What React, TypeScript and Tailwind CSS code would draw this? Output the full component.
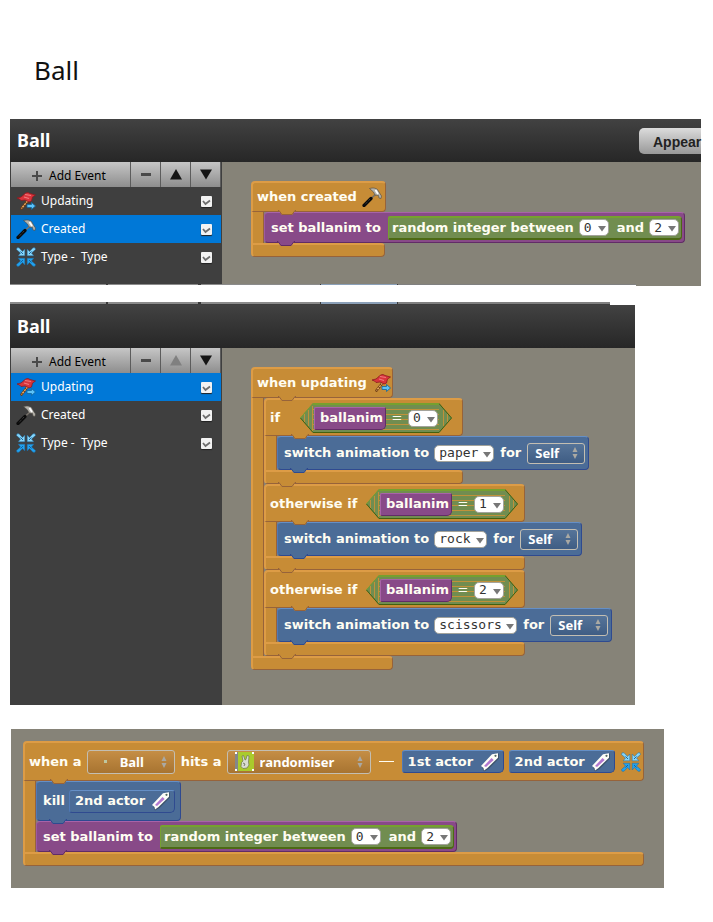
import type { ReactNode } from "react";

const BLOCK_TEXT = "font-['DejaVu_Sans',sans-serif] text-[13px] leading-4 font-bold text-[#fffdf2] whitespace-nowrap";

type Tone = "orange" | "blue" | "purple";

const tones: Record<Tone, { box: string; fill: string; dark: string }> = {
  orange: {
    box: "bg-[#c78c36] border-t-[#dd9c46] border-l-[#dd9c46] border-r-[#97633a] border-b-[#97633a]",
    fill: "#c78c36",
    dark: "#97633a",
  },
  blue: {
    box: "bg-[#4b6c97] border-t-[#658fc6] border-l-[#5079b6] border-r-[#2f4a90] border-b-[#2f4a90]",
    fill: "#4b6c97",
    dark: "#2f4a90",
  },
  purple: {
    box: "bg-[#884a88] border-t-[#a863a8] border-l-[#9d5a9f] border-r-[#612c66] border-b-[#612c66]",
    fill: "#884a88",
    dark: "#612c66",
  },
};

/* ---------- icons ---------- */

function FlagIcon() {
  return (
    <svg viewBox="0 0 20 20" className="size-5 shrink-0" aria-hidden="true">
      <path d="M11.500 10 5.500 17.500" stroke="#6b3a12" strokeWidth="2.600" strokeLinecap="round" />
      <path d="M11.500 10 5.500 17.500" stroke="#efb269" strokeWidth="1.400" strokeDasharray="2 1" />
      <path d="M1 7 5 6 8 3.500 9.500 2 12 1.500 14 2.500 19.500 4 16.500 6 15.500 10 13 11 9 9 5 9.500 3.500 8Z" fill="#d9343c" stroke="#8c1a20" strokeWidth="0.800" />
      <path d="M9 3.500 15 4.500M8 6l5 1.500" stroke="#f27a7c" strokeWidth="1.200" />
      <path d="M11 13.500h4.500v-2l4 3.500-4 3.500v-2H11z" fill="#5cc2f7" stroke="#12649c" strokeWidth="0.800" />
    </svg>
  );
}

function HammerIcon() {
  return (
    <svg viewBox="0 0 20 20" className="size-5 shrink-0" aria-hidden="true">
      <path d="M14 7 9 11.500" stroke="#77716a" strokeWidth="1.600" />
      <path d="M9 11.500 2 18.500" stroke="#0b0b0b" strokeWidth="3.200" strokeLinecap="round" />
      <path d="M8 12 3 17.500" stroke="#5b5b5b" strokeWidth="0.800" strokeDasharray="1 1" />
      <path d="M7.500 1.500C11 .5 13.500 1 15.500 2.500L17.500 6l2 3-.5 2.500-2-.5-.5-2.500-3.500-.5-1.500-3Z" fill="#b5b3ac" stroke="#4a4740" strokeWidth="0.600" />
      <path d="M13.500 3 16 7" stroke="#fff" strokeWidth="1.800" />
    </svg>
  );
}

function CollideIcon() {
  return (
    <svg viewBox="0 0 20 20" className="size-5 shrink-0" aria-hidden="true">
      <g stroke="#1b6aa5" strokeWidth="0.500">
        <path d="M.5 2.500 1 .8 3 .8 6.500 4.500 8.800 2V8.800H2.200L4.500 6z" fill="#86d6fa" />
        <path d="M19.500 2.500 19 .8 17 .8 13.500 4.500 11.200 2V8.800h6.600L15.500 6z" fill="#86d6fa" />
        <path d="M.5 17.500 1 19.200 3 19.200 6.500 15.500 8.800 18V11.200H2.200L4.500 14z" fill="#22a2ee" />
        <path d="M19.500 17.500 19 19.200 17 19.200 13.500 15.500 11.200 18V11.200h6.600L15.500 14z" fill="#22a2ee" />
      </g>
      <path d="M4.500 4.500 7 7M15.500 4.500 13 7M4.500 15.500l2.500-2.500M15.500 15.500 13 13" stroke="#0e5c9c" strokeWidth="0.900" />
    </svg>
  );
}

function TagIcon() {
  return (
    <svg viewBox="0 0 20 20" className="size-5 shrink-0" aria-hidden="true">
      <path d="M2 15 12.500 3.500l6.500-2v5L8.500 17l-4.500 2.500z" fill="#33424f" opacity="0.600" />
      <path d="M1 14 12 2.200l6-1v4.500L7.500 16 4 18.500l-.5-2.500z" fill="#fdfdf8" />
      <path d="M4 14 11.500 6l2.200 2L6 15z" fill="#b277cf" />
      <circle cx="15.500" cy="3.800" r="1.100" fill="#53685c" />
    </svg>
  );
}

function RabbitIcon() {
  return (
    <svg viewBox="0 0 19 19" className="h-[19px] w-[19px]" aria-hidden="true">
      <path d="M0 0h19v19H0z" fill="#aacb2c" />
      <path d="M0 0h3v19H0z" fill="#84878a" />
      <path d="M0 0h2v2H0zM17 0h2v2h-2zM0 17h2v2H0zM17 17h2v2h-2z" fill="#fff" />
      <path d="M7 4 8.500 3.500 10 8l1-.5L12 3.500l2 .5-.5 6 .5 3-2 3-4 .5-2-2 .5-4L8 9z" fill="#d9dcd2" stroke="#6b7350" strokeWidth="0.700" />
      <path d="m8 11 2 1-1 2" stroke="#767c68" fill="none" />
    </svg>
  );
}

function Spinner({ className }: { className: string }) {
  return (
    <svg viewBox="0 0 6 14" className={`pointer-events-none absolute h-[14px] w-[6px] ${className}`} aria-hidden="true">
      <path d="M3 1 5.500 6h-5zM3 13 .5 8h5z" fill="#aaa9a3" />
    </svg>
  );
}

/* ---------- block parts ---------- */

function Notch({ tone, className }: { tone: Tone; className: string }) {
  const t = tones[tone];
  return (
    <svg viewBox="0 0 18 6" className={`absolute z-10 h-[6px] w-[18px] ${className}`} aria-hidden="true">
      <path d="M0 0V1H1L4 5H14L17 1H18V0Z" fill={t.fill} />
      <path d="M0 .5H1L4 4.500H14L17 .5H18" fill="none" stroke={t.dark} />
    </svg>
  );
}

function Statement({ tone, height, children }: { tone: Tone; height: string; children: ReactNode }) {
  return (
    <div className={`relative flex w-fit items-center rounded-[4px] border pl-[6px] ${height} ${tones[tone].box} ${BLOCK_TEXT}`}>
      {children}
      <Notch tone={tone} className="top-full left-3 -mt-px" />
    </div>
  );
}

function Wrap({
  head,
  headClass,
  footClass,
  nested,
  children,
}: {
  head: ReactNode;
  headClass: string;
  footClass: string;
  nested?: boolean;
  children: ReactNode;
}) {
  return (
    <div className="flex w-fit flex-col items-start">
      <div className={`relative flex items-center rounded-t-[4px] rounded-br-[4px] border-t-2 border-r border-b border-l-2 pl-1 ${headClass} ${tones.orange.box} ${BLOCK_TEXT}`}>
        {head}
        <Notch tone="orange" className="top-full left-[25px] -mt-px" />
      </div>
      <div className="flex">
        <div className="w-[13px] shrink-0 border-r border-l-2 border-r-[#97633a] border-l-[#dd9c46] bg-[#c78c36]" />
        <div className="flex flex-col items-start">{children}</div>
      </div>
      <div className={`relative h-[14px] rounded-r-[4px] rounded-bl-[4px] border-t-2 border-r border-b border-l-2 ${footClass} ${tones.orange.box}`}>
        {nested && <Notch tone="orange" className="top-full left-[12px] -mt-px" />}
      </div>
    </div>
  );
}

function ValueSelect({ value, label, width }: { value: string; label: string; width: string }) {
  return (
    <span className={`relative inline-flex h-[17px] shrink-0 ${width}`}>
      <select
        aria-label={label}
        defaultValue={value}
        className="h-[17px] w-full appearance-none rounded-[5px] border border-[#a3a39b] bg-white pl-1 font-['DejaVu_Sans_Mono',monospace] text-[13px] leading-[14px] font-normal text-[#333]"
      >
        <option>{value}</option>
      </select>
      <svg viewBox="0 0 8 6" className="pointer-events-none absolute top-[7px] right-[3px] h-[6px] w-2" aria-hidden="true">
        <path d="M0 0h8L4 5.500z" fill="#777" />
      </svg>
    </span>
  );
}

function ObjectSelect({ value, label, tone, width, pad, children }: { value: string; label: string; tone: "blue" | "orange"; width: string; pad: string; children?: ReactNode }) {
  const face = tone === "blue" ? "from-[#567499] to-[#3f5d84] h-[21px]" : "from-[#c58e45] to-[#a87431] h-6";
  return (
    <span className={`relative inline-flex shrink-0 items-center ${width}`}>
      <select
        aria-label={label}
        defaultValue={value}
        className={`w-full appearance-none rounded-[3px] border border-[#c3beb2] bg-linear-to-b font-['Noto_Sans',sans-serif] text-[13px] leading-4 font-bold text-white ${face} ${pad}`}
      >
        <option>{value}</option>
      </select>
      {children}
      <Spinner className={tone === "blue" ? "right-[7px]" : "right-2"} />
    </span>
  );
}

function ActorSlot({ name, width }: { name: string; width: string }) {
  return (
    <span className={`flex h-[23px] shrink-0 items-center justify-between rounded-[3px] rounded-br-[5px] border pr-[3px] pl-[5px] ${width} ${tones.blue.box}`}>
      {name}
      <TagIcon />
    </span>
  );
}

function RandomAssign() {
  return (
    <Statement tone="purple" height="h-[31px]">
      <span>set ballanim to</span>
      <span className="mr-[2px] ml-[7px] flex h-6 items-center rounded-[2px] rounded-r-[4px] border-t-2 border-r border-b-2 border-l border-t-[#76a02f] border-r-[#4c6914] border-b-[#4c6914] border-l-[#76a02f] bg-[#718d50] pr-[2px] pl-[3px]">
        <span>random integer between</span>
        <span className="mr-2 ml-[5px] flex">
          <ValueSelect value="0" label="Lowest value" width="w-[30px]" />
        </span>
        <span>and</span>
        <span className="ml-[5px] flex">
          <ValueSelect value="2" label="Highest value" width="w-[30px]" />
        </span>
      </span>
    </Statement>
  );
}

function Comparison({ value }: { value: string }) {
  return (
    <span className="flex h-[30px] shrink-0">
      <svg viewBox="0 0 13 30" className="h-[30px] w-[13px]" aria-hidden="true">
        <path d="M13 0 0 15 13 30z" fill="#718d50" />
        <path d="M13 .5.500 15" stroke="#76a02f" />
        <path d="M.5 15 13 29.500" stroke="#41610f" />
        <path d="M4.500 11v8M8.500 7v16M12.500 3v25" stroke="#c0913a" />
      </svg>
      <span className="flex w-[126px] items-center border-t-2 border-b border-t-[#76a02f] border-b-[#41610f] bg-[repeating-linear-gradient(to_bottom,#718d50_0px,#718d50_4px,#c0913a_4px,#c0913a_5px)] pr-px pl-px">
        <span className="flex h-[23px] w-[72px] shrink-0 items-center rounded-[2px] rounded-br-[5px] border border-t-[#a863a8] border-r-[#612c66] border-b-[#612c66] border-l-[#a863a8] bg-[#884a88] pl-[5px]">
          ballanim
        </span>
        <span className="flex-1 text-center font-normal">=</span>
        <ValueSelect value={value} label="Compared value" width="w-[30px]" />
      </span>
      <svg viewBox="0 0 13 30" className="h-[30px] w-[13px]" aria-hidden="true">
        <path d="M0 0 13 15 0 30z" fill="#718d50" />
        <path d="M0 .5 12.500 15 0 29.500" fill="none" stroke="#41610f" />
        <path d="M4.500 7v16M8.500 11v8" stroke="#c0913a" />
      </svg>
    </span>
  );
}

function Branch({ word, headClass, footClass, value, animation, width }: { word: string; headClass: string; footClass: string; value: string; animation: string; width: string }) {
  return (
    <Wrap
      nested
      headClass={`h-[38px] justify-between ${headClass}`}
      footClass={footClass}
      head={
        <>
          <span>{word}</span>
          <Comparison value={value} />
        </>
      }
    >
      <Statement tone="blue" height="h-[34px]">
        <span className="mr-[5px]">switch animation to</span>
        <ValueSelect value={animation} label="Animation" width={width} />
        <span className="mx-[6px]">for</span>
        <span className="mr-[3px] flex">
          <ObjectSelect value="Self" label="Animated actor" tone="blue" width="w-[58px]" pad="pl-[7px]" />
        </span>
      </Statement>
    </Wrap>
  );
}

/* ---------- editor panels ---------- */

const events = [
  { name: "Updating", icon: <FlagIcon /> },
  { name: "Created", icon: <HammerIcon /> },
  { name: "Type -  Type", icon: <CollideIcon /> },
];

function EventList({ id, selected, upDisabled }: { id: string; selected: string; upDisabled?: boolean }) {
  const tool = "flex h-[25px] w-[30px] shrink-0 items-center justify-center border-l border-[#5c5c5c]";
  return (
    <aside className="w-[212px] shrink-0 bg-[#3f3f3f] px-px font-['Noto_Sans',sans-serif] text-[12px] leading-4">
      <div className="flex border-r border-[#5c5c5c] bg-linear-to-b from-[#c6c6c6] to-[#8e8e8e] text-black">
        <button className="flex h-[25px] flex-1 items-center pt-[2px] pl-[21px]">
          <svg viewBox="0 0 10 10" className="mr-[7px] size-[10px]" aria-hidden="true">
            <path d="M5 0v10M0 5h10" stroke="#4a4a4a" strokeWidth="2" />
          </svg>
          Add Event
        </button>
        <button aria-label="Remove event" className={tool}>
          <svg viewBox="0 0 10 3" className="h-[3px] w-[10px]" aria-hidden="true">
            <path d="M0 0h10v3H0z" fill="#4a4a4a" />
          </svg>
        </button>
        <button aria-label="Move up" disabled={upDisabled} className={tool}>
          <svg viewBox="0 0 12 11" className="h-[11px] w-3" aria-hidden="true">
            <path d="M6 0 12 10.500H0z" fill={upDisabled ? "#808080" : "#151515"} />
          </svg>
        </button>
        <button aria-label="Move down" className={tool}>
          <svg viewBox="0 0 12 11" className="h-[11px] w-3" aria-hidden="true">
            <path d="M6 10.500 0 .5h12z" fill="#151515" />
          </svg>
        </button>
      </div>
      <ul>
        {events.map((event) => (
          <li
            key={event.name}
            className={`flex h-[28px] items-center pr-[9px] pl-[5px] ${event.name === selected ? "bg-[#0078d7]" : ""}`}
          >
            {event.icon}
            <label htmlFor={`${id}-${event.name}`} className="ml-[5px] flex-1 whitespace-pre text-white">
              {event.name}
            </label>
            <span className="relative flex">
              <input
                id={`${id}-${event.name}`}
                type="checkbox"
                defaultChecked
                className="size-[11px] appearance-none rounded-[1px] bg-[#f2f2f2] shadow-[0_1px_1px_#222]"
              />
              <svg viewBox="0 0 11 11" className="pointer-events-none absolute inset-0 size-[11px]" aria-hidden="true">
                <path d="M2 5 4.500 8 9 4.500" fill="none" stroke="#6d6d6d" strokeWidth="1.800" />
              </svg>
            </span>
          </li>
        ))}
      </ul>
    </aside>
  );
}

function PanelHeader({ children }: { children?: ReactNode }) {
  return (
    <header className="flex h-[43px] items-center justify-between bg-linear-to-b from-[#424242] to-[#272727] pl-[7px]">
      <h2 className="pb-px font-['Noto_Sans',sans-serif] text-[18px] leading-6 font-bold text-white">Ball</h2>
      {children}
    </header>
  );
}

function StripCells() {
  return (
    <>
      <div className="w-[96px] bg-[#8b8b8b]" />
      <div className="ml-[2px] w-[90px] bg-[#8b8b8b]" />
      <div className="ml-[3px] w-[119px] bg-[#8b8b8b]" />
      <div className="ml-px w-[76px] bg-[#8ba0b8]" />
      <div className="ml-px flex-1 bg-[#808080]" />
    </>
  );
}

export default function App() {
  return (
    <main className="bg-white pt-[52px] pb-[34px] pl-[10px]">
      <h1 className="pl-6 font-['Noto_Sans',sans-serif] text-[26px] leading-9 text-[#111]">Ball</h1>

      <section className="relative mt-[31px] mr-3">
        <PanelHeader>
          <button className="h-[26px] w-[62px] rounded-l-[5px] bg-linear-to-b from-[#dcdcdc] to-[#999] pl-[14px] text-left font-['Liberation_Sans',sans-serif] text-[14px] leading-7 font-bold whitespace-nowrap text-[#222]">
            Appear
          </button>
        </PanelHeader>
        <div className="flex h-[124px]">
          <EventList id="first" selected="Created" />
          <div className="flex-1 bg-[#868378] pt-[19px] pl-[29px]">
            <Wrap
              headClass="h-[31px] w-[135px] justify-between pr-[3px]"
              footClass="w-[134px]"
              head={
                <>
                  <span>when created</span>
                  <HammerIcon />
                </>
              }
            >
              <RandomAssign />
            </Wrap>
          </div>
        </div>
        <div className="absolute bottom-0 left-0 w-full max-w-[626px] bg-white pb-px">
          <div className="flex h-px bg-[#3a3a3a]">
            <StripCells />
          </div>
        </div>
      </section>

      <div className="mt-4 flex h-[3px] w-full max-w-[600px] border-b border-[#3f3f3f] bg-[#3a3a3a]">
        <StripCells />
      </div>

      <section className="w-full max-w-[625px]">
        <PanelHeader />
        <div className="flex">
          <EventList id="second" selected="Updating" upDisabled />
          <div className="flex-1 bg-[#868378] pt-[19px] pb-[35px] pl-[29px]">
            <Wrap
              headClass="h-[31px] w-[142px] justify-between pr-px"
              footClass="w-[142px]"
              head={
                <>
                  <span>when updating</span>
                  <FlagIcon />
                </>
              }
            >
              <Branch word="if" headClass="w-[199px] pr-[10px]" footClass="w-[199px]" value="0" animation="paper" width="w-[60px]" />
              <Branch word="otherwise if" headClass="w-[261px] pr-[6px]" footClass="w-[261px]" value="1" animation="rock" width="w-[53px]" />
              <Branch word="otherwise if" headClass="w-[261px] pr-[6px]" footClass="w-[261px]" value="2" animation="scissors" width="w-[83px]" />
            </Wrap>
          </div>
        </div>
      </section>

      <section className="mt-6 ml-px w-full max-w-[653px] bg-[#868378] pt-3 pb-[22px] pl-3">
        <Wrap
          headClass="h-10 w-[621px] pr-px"
          footClass="w-[621px]"
          head={
            <>
              <span>when a</span>
              <span className="mr-[6px] ml-[5px] flex">
                <ObjectSelect value="Ball" label="First actor type" tone="orange" width="w-[88px]" pad="pl-8">
                  <span className="pointer-events-none absolute left-[17px] size-[3px] bg-[#bfc7a0]" />
                </ObjectSelect>
              </span>
              <span>hits a</span>
              <span className="ml-[5px] flex">
                <ObjectSelect value="randomiser" label="Second actor type" tone="orange" width="w-[144px]" pad="pl-8">
                  <span className="pointer-events-none absolute left-2">
                    <RabbitIcon />
                  </span>
                </ObjectSelect>
              </span>
              <span className="mx-2 h-px w-[15px] bg-[#fffdf2]" />
              <ActorSlot name="1st actor" width="w-[102px]" />
              <span className="mr-[6px] ml-[5px] flex">
                <ActorSlot name="2nd actor" width="w-[106px]" />
              </span>
              <CollideIcon />
            </>
          }
        >
          <Statement tone="blue" height="h-10">
            <span>kill</span>
            <span className="mr-[5px] ml-1 flex">
              <ActorSlot name="2nd actor" width="w-[106px]" />
            </span>
          </Statement>
          <RandomAssign />
        </Wrap>
      </section>
    </main>
  );
}
